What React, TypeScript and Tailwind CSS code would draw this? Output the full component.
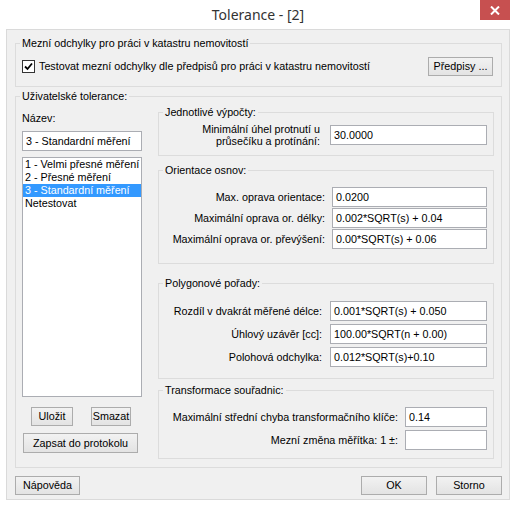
import React from 'react';

function Btn({ children, className = '' }: { children: React.ReactNode; className?: string }) {
  return (
    <button
      type="button"
      className={`flex h-[19px] items-center justify-center border border-[#acacac] bg-linear-to-b from-[#f2f2f2] to-[#e3e3e3] leading-none text-black ${className}`}
    >
      {children}
    </button>
  );
}

function Field({ value = '', className = '' }: { value?: string; className?: string }) {
  return (
    <div className={`h-[20px] whitespace-nowrap border border-[#abadb3] bg-white pl-[3px] leading-[18px] ${className}`}>
      {value}
    </div>
  );
}

function Group({ title, className = '', children }: { title: string; className?: string; children: React.ReactNode }) {
  return (
    <div className={`border border-[#dcdcdc] ${className}`}>
      <div className="-mt-[7px] ml-[4px] w-fit bg-[#f0f0f0] px-[2px] leading-[13px]">{title}</div>
      {children}
    </div>
  );
}

function Row({ label, value, gap, width }: { label: string; value: string; gap: string; width: string }) {
  return (
    <div className="flex items-center justify-end pr-[6px]">
      <span className="whitespace-nowrap leading-[13px]">{label}</span>
      <Field value={value} className={`${gap} ${width}`} />
    </div>
  );
}

const profiles = ['1 - Velmi přesné měření', '2 - Přesné měření', '3 - Standardní měření', 'Netestovat'];

export default function App() {
  return (
    <div className="relative h-[507px] w-[516px] bg-white font-['Liberation_Sans',Arial,sans-serif] text-[10.75px] text-black">
      <div className="flex h-[29px] items-center justify-center font-['Noto_Sans',sans-serif] text-[14px] text-[#333]">
        Tolerance - [2]
      </div>
      <button type="button" className="absolute right-[6px] top-0 flex h-[20px] w-[30px] items-center justify-center bg-[#c75050]">
        <svg width="10" height="9" viewBox="0 0 10 9">
          <path d="M1 0.5 L9 8.5 M9 0.5 L1 8.5" stroke="white" strokeWidth="2" />
        </svg>
      </button>

      <div className="ml-[6px] h-[471px] w-[504px] border border-[#dadada] bg-[#f0f0f0] pl-[8px] pt-[13px]">
        <Group title="Mezní odchylky pro práci v katastru nemovitostí" className="w-[487px] pb-[10px]">
          <div className="mt-[6px] flex h-[20px] items-center pl-[6px] pr-[8px]">
            <svg width="13" height="13" viewBox="0 0 13 13">
              <rect x="0.5" y="0.5" width="12" height="12" fill="white" stroke="#333" />
              <path d="M3 6.5 L5.5 9 L10 3.5" fill="none" stroke="black" strokeWidth="1.8" />
            </svg>
            <span className="ml-[4px] whitespace-nowrap">Testovat mezní odchylky dle předpisů pro práci v katastru nemovitostí</span>
            <Btn className="ml-auto w-[65px]">Předpisy ...</Btn>
          </div>
        </Group>

        <Group title="Uživatelské tolerance:" className="mt-[9px] w-[487px] pb-[8px]">
          <div className="flex gap-[16px] pl-[6px] pr-[7px]">
            <div className="w-[120px]">
              <div className="mt-[9px] leading-[12px]">Název:</div>
              <Field value="3 - Standardní měření" className="mt-[7px]" />
              <div className="mt-[6px] h-[240px] overflow-hidden border border-[#abadb3] bg-white">
                {profiles.map((p, i) => (
                  <div
                    key={p}
                    className={`whitespace-nowrap pl-[2px] leading-[13px] ${i === 2 ? 'bg-[#3399ff] text-white' : ''}`}
                  >
                    {p}
                  </div>
                ))}
              </div>
              <div className="mt-[10px] flex">
                <Btn className="ml-[9px] w-[42px]">Uložit</Btn>
                <Btn className="ml-[18px] w-[40px]">Smazat</Btn>
              </div>
              <Btn className="ml-[1px] mt-[7px] h-[20px] w-[115px]">Zapsat do protokolu</Btn>
            </div>

            <div className="w-[336px]">
              <Group title="Jednotlivé výpočty:" className="mt-[9px] pb-[8px]">
                <div className="mt-[4px] flex items-center justify-end pr-[6px]">
                  <div className="text-right leading-[12px]">
                    Minimální úhel protnutí u
                    <br />
                    průsečíku a protínání:
                  </div>
                  <Field value="30.0000" className="ml-[10px] h-[19px] w-[157px]" />
                </div>
              </Group>

              <Group title="Orientace osnov:" className="mt-[14px] pb-[14px]">
                <div className="mt-[10px] flex flex-col gap-[1px]">
                  <Row label="Max. oprava orientace:" value="0.0200" gap="ml-[7px]" width="w-[155px]" />
                  <Row label="Maximální oprava or. délky:" value="0.002*SQRT(s) + 0.04" gap="ml-[7px]" width="w-[155px]" />
                  <Row label="Maximální oprava or. převýšení:" value="0.00*SQRT(s) + 0.06" gap="ml-[7px]" width="w-[155px]" />
                </div>
              </Group>

              <Group title="Polygonové pořady:" className="mt-[19px] pb-[11px]">
                <div className="mt-[11px] flex flex-col gap-[3px]">
                  <Row label="Rozdíl v dvakrát měřené délce:" value="0.001*SQRT(s) + 0.050" gap="ml-[8px]" width="w-[157px]" />
                  <Row label="Úhlový uzávěr [cc]:" value="100.00*SQRT(n + 0.00)" gap="ml-[8px]" width="w-[157px]" />
                  <Row label="Polohová odchylka:" value="0.012*SQRT(s)+0.10" gap="ml-[8px]" width="w-[157px]" />
                </div>
              </Group>

              <Group title="Transformace souřadnic:" className="mt-[11px] pb-[8px]">
                <div className="mt-[10px] flex flex-col gap-[3px]">
                  <Row label="Maximální střední chyba transformačního klíče:" value="0.14" gap="ml-[7px]" width="w-[82px]" />
                  <Row label="Mezní změna měřítka: 1 ±:" value="" gap="ml-[7px]" width="w-[82px]" />
                </div>
              </Group>
            </div>
          </div>
        </Group>

        <div className="mt-[8px] flex w-[487px] items-center">
          <Btn className="w-[65px]">Nápověda</Btn>
          <Btn className="ml-auto w-[66px] border-[#5a9be0]">OK</Btn>
          <Btn className="ml-[9px] w-[66px]">Storno</Btn>
        </div>
      </div>
    </div>
  );
}
